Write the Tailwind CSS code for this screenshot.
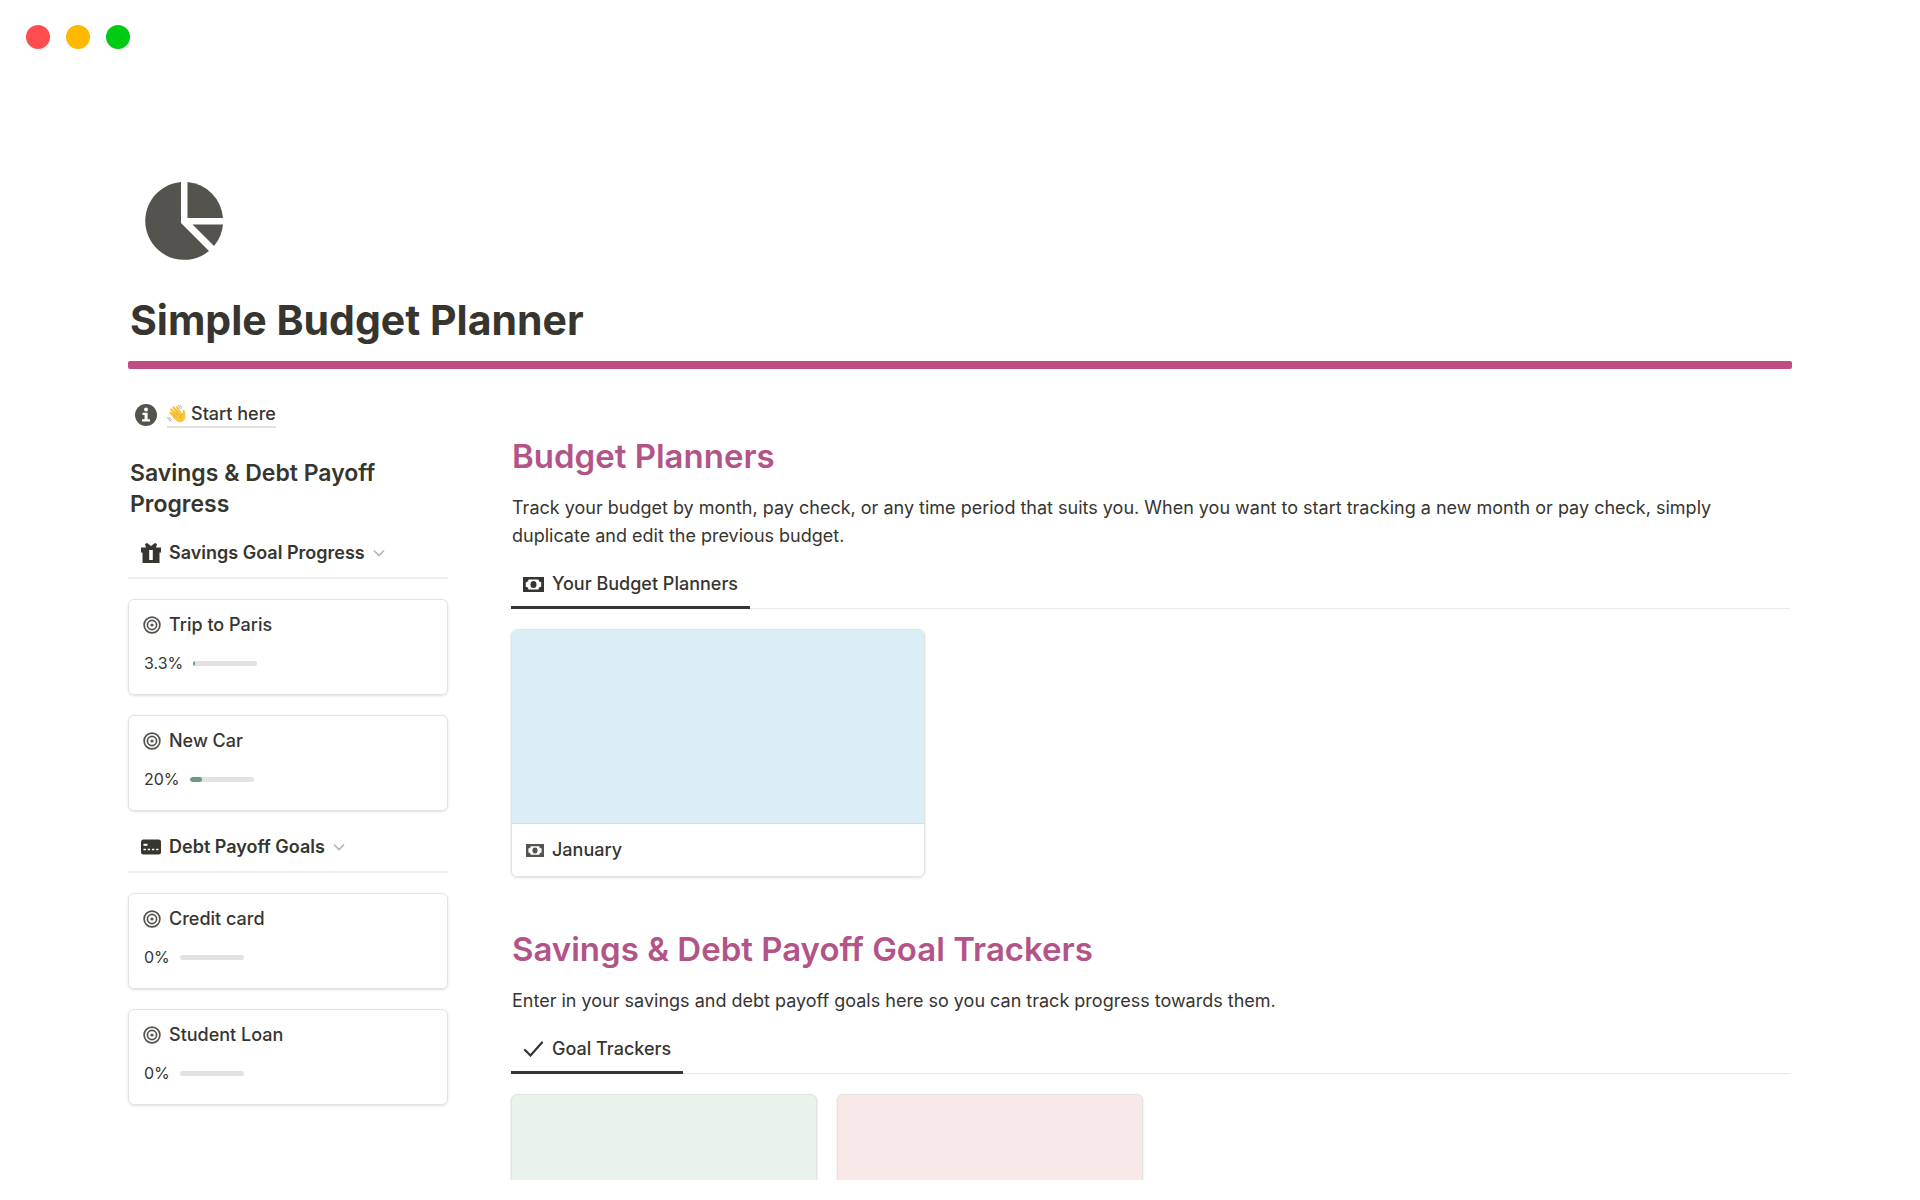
<!DOCTYPE html>
<html lang="en">
<head>
    <meta charset="UTF-8">
    <meta name="viewport" content="width=device-width, initial-scale=1.0">
    <title>Simple Budget Planner</title>
    <script src="https://cdn.jsdelivr.net/npm/@tailwindcss/browser@4"></script>
</head>
<body class="bg-white font-['Inter',sans-serif] text-[#37352f] text-[18px] leading-7 h-screen flex flex-col overflow-hidden pb-5">
    <!-- Shared icons -->
    <svg class="hidden">
        <symbol id="icon-target" viewBox="0 0 18 18">
            <g fill="none" stroke="currentColor" stroke-width="1.7">
                <circle cx="9" cy="9" r="7.9"/>
                <circle cx="9" cy="9" r="4.6"/>
            </g>
            <circle cx="9" cy="9" r="1.6" fill="currentColor"/>
        </symbol>
        <symbol id="icon-cash" viewBox="0 0 21 15">
            <path fill="currentColor" fill-rule="evenodd" d="M0 0H21V15H0ZM5.5 2.5C5.500 4 4.500 5 2.800 5.200V9.800C4.500 10 5.500 11 5.500 12.500H15.500C15.500 11 16.500 10 18.200 9.800V5.200C16.500 5 15.500 4 15.500 2.500Z"/>
            <ellipse cx="10.500" cy="7.500" rx="3" ry="3.500" fill="currentColor"/>
        </symbol>
        <symbol id="icon-chevron" viewBox="0 0 12 8">
            <path d="M1 1.500L6 6.500L11 1.500" fill="none" stroke="currentColor" stroke-width="1.600"/>
        </symbol>
    </svg>

    <!-- Window controls -->
    <div class="flex gap-4 pl-[26px] pt-[25px]">
        <button aria-label="Close" class="size-6 rounded-full bg-[#ff4d4f]"></button>
        <button aria-label="Minimize" class="size-6 rounded-full bg-[#ffb800]"></button>
        <button aria-label="Zoom" class="size-6 rounded-full bg-[#00ca14]"></button>
    </div>

    <main class="flex-1 min-h-0 overflow-hidden px-32 pt-[133px]">
        <!-- Page header -->
        <header>
            <svg class="size-[78px] ml-[17px] text-[#55534e]" viewBox="0 0 78 78" fill="currentColor">
                <path d="M36 0A39 39 0 1 0 64 69L36 41Z"/>
                <path d="M42.500 0A39 39 0 0 1 78 36H42.500Z"/>
                <path d="M47.500 42.500H78A39 39 0 0 1 69 64Z"/>
            </svg>
            <h1 class="pl-0.5 pt-8 text-[41px] leading-14 font-bold">Simple Budget Planner</h1>
            <div class="mt-[13px] h-2 rounded-xs bg-[#c14c80]"></div>
        </header>

        <div class="flex gap-16 pt-8">
            <!-- Sidebar -->
            <aside class="w-80 shrink-0">
                <div class="flex items-center gap-2.5 pl-[7px] pt-px">
                    <svg class="size-[22px] text-[#55534e]" viewBox="0 0 22 22">
                        <circle cx="11" cy="11" r="11" fill="currentColor"/>
                        <circle cx="11" cy="5.500" r="2" fill="#fff"/>
                        <path d="M7.500 8.800H12.600V15.300H15V17.500H7V15.300H9.600V11H7.500Z" fill="#fff"/>
                    </svg>
                    <a href="#start" class="flex items-center gap-1 border-b-2 border-[#e3e2e0] font-medium leading-6">
                        <svg class="size-5" viewBox="0 0 20 20" fill="none" stroke-linecap="round">
                            <path d="M4 5.500L10.500 13M6.500 3.500L12 11M9.800 3.200L14 10M3.500 9L9.500 15" stroke="#fbc53d" stroke-width="2.200"/>
                            <path d="M7.500 9.500L13.500 8.500L15.500 9.500L16 5.800C17.600 5.500 18.300 7 18.300 9V13.500C17.800 17 14.500 19 11.500 18C9.500 17.300 7.500 15.300 5.800 13.600Z" fill="#fbc53d"/>
                            <path d="M6.500 7L10 11M8.600 5.600L12 10.200M5.500 9.500L9 13M15.500 10C13.600 11 13 12.500 13.300 14" stroke="#e09a24" stroke-width=".7"/>
                            <path d="M11.500 1.200C13.200 1.400 14.200 2.500 14.500 4M12 3C12.700 3.300 13 3.800 13.200 4.500M.8 13.500C1.200 15.300 2.300 16.500 4 17M2.500 13.500C2.900 14.500 3.400 15 4.200 15.400" stroke="#a5a5a5" stroke-width="1"/>
                        </svg>
                        Start here
                    </a>
                </div>

                <h3 class="pl-0.5 pt-[30px] text-[23px] leading-[31px] font-semibold">Savings &amp; Debt Payoff Progress</h3>

                <button class="mt-[19px] flex w-full items-center gap-2 border-b-2 border-[#eeeeed] pb-2.5 pl-[13px] font-semibold leading-7">
                    <svg class="size-5" viewBox="0 0 20 20" fill="currentColor">
                        <path fill-rule="evenodd" d="M0 4.500H5L4 1L6 0L10 3L14 0L16 1L15 4.500H20V9.500H18.500V20H1.500V9.500H0ZM8.200 7V17H11.800V7Z"/>
                    </svg>
                    Savings Goal Progress
                    <svg class="w-3 h-2 text-[#b5b4b1]"><use href="#icon-chevron"/></svg>
                </button>

                <div class="flex flex-col gap-5 pt-5">
                    <article class="h-24 rounded-md border border-[#e2e2e1] px-3.5 pt-[11px] shadow-sm">
                        <h4 class="flex items-center gap-2 font-medium"><svg class="size-[18px] text-[#55534e]"><use href="#icon-target"/></svg>Trip to Paris</h4>
                        <div class="flex items-center gap-2.5 pl-px pt-3 text-[16px] leading-6">3.3%
                            <div class="flex h-[5px] w-16 overflow-hidden rounded-full bg-[#e3e2e0]"><div class="rounded-full bg-[#6c9b7d]" style="width: 3.3%"></div></div>
                        </div>
                    </article>
                    <article class="h-24 rounded-md border border-[#e2e2e1] px-3.5 pt-[11px] shadow-sm">
                        <h4 class="flex items-center gap-2 font-medium"><svg class="size-[18px] text-[#55534e]"><use href="#icon-target"/></svg>New Car</h4>
                        <div class="flex items-center gap-2.5 pl-px pt-3 text-[16px] leading-6">20%
                            <div class="flex h-[5px] w-16 overflow-hidden rounded-full bg-[#e3e2e0]"><div class="rounded-full bg-[#6c9b7d]" style="width: 20%"></div></div>
                        </div>
                    </article>
                </div>

                <button class="mt-[22px] flex w-full items-center gap-2 border-b-2 border-[#eeeeed] pb-2.5 pl-[13px] font-semibold leading-7">
                    <svg class="size-5" viewBox="0 0 20 20">
                        <rect y="2.500" width="20" height="15" rx="2.500" fill="currentColor"/>
                        <path d="M2.500 7.800H6.500" stroke="#fff" stroke-width="2"/>
                        <path d="M2.500 12.500H17.500" stroke="#fff" stroke-width="1.600" stroke-dasharray="2.400 1.800"/>
                    </svg>
                    Debt Payoff Goals
                    <svg class="w-3 h-2 text-[#b5b4b1]"><use href="#icon-chevron"/></svg>
                </button>

                <div class="flex flex-col gap-5 pt-5">
                    <article class="h-24 rounded-md border border-[#e2e2e1] px-3.5 pt-[11px] shadow-sm">
                        <h4 class="flex items-center gap-2 font-medium"><svg class="size-[18px] text-[#55534e]"><use href="#icon-target"/></svg>Credit card</h4>
                        <div class="flex items-center gap-2.5 pl-px pt-3 text-[16px] leading-6">0%
                            <div class="h-[5px] w-16 rounded-full bg-[#e3e2e0]"></div>
                        </div>
                    </article>
                    <article class="h-24 rounded-md border border-[#e2e2e1] px-3.5 pt-[11px] shadow-sm">
                        <h4 class="flex items-center gap-2 font-medium"><svg class="size-[18px] text-[#55534e]"><use href="#icon-target"/></svg>Student Loan</h4>
                        <div class="flex items-center gap-2.5 pl-px pt-3 text-[16px] leading-6">0%
                            <div class="h-[5px] w-16 rounded-full bg-[#e3e2e0]"></div>
                        </div>
                    </article>
                </div>
            </aside>

            <!-- Main column -->
            <div class="flex-1 min-w-0 -ml-px mr-0.5">
                <section class="pt-[31px]">
                    <h2 class="pl-px text-[33px] leading-12 font-semibold text-[#b35488]">Budget Planners</h2>
                    <p class="pl-px pt-3.5">Track your budget by month, pay check, or any time period that suits you. When you want to start tracking a new month or pay check, simply duplicate and edit the previous budget.</p>
                    <div class="mt-3 flex border-b border-[#e9e9e7]">
                        <button class="-mb-px flex items-center gap-2 border-b-3 border-[#37352f] px-3 pb-2 pt-2 font-medium">
                            <svg class="w-[21px] h-[15px]"><use href="#icon-cash"/></svg>
                            Your Budget Planners
                        </button>
                    </div>
                    <div class="mt-5 w-[414px] overflow-hidden rounded-md border border-[#e2e2e1] shadow-sm">
                        <div class="h-[194px] border-b border-[#cfdfe6] bg-[#dbeef6]"></div>
                        <h4 class="flex items-center gap-2 px-3.5 py-3 font-medium"><svg class="w-[18px] h-[13px] text-[#55534e]"><use href="#icon-cash"/></svg>January</h4>
                    </div>
                </section>

                <section class="pt-12">
                    <h2 class="pl-px text-[33px] leading-12 font-semibold text-[#b35488]">Savings &amp; Debt Payoff Goal Trackers</h2>
                    <p class="pl-px pt-3.5">Enter in your savings and debt payoff goals here so you can track progress towards them.</p>
                    <div class="mt-3 flex border-b border-[#e9e9e7]">
                        <button class="-mb-px flex items-center gap-2 border-b-3 border-[#37352f] px-3 pb-2 pt-2 font-medium">
                            <svg class="w-[21px] h-4" viewBox="0 0 21 16" fill="none" stroke="currentColor" stroke-width="2.200" stroke-linecap="round"><path d="M2 9L7.500 14.500L19 1.500"/></svg>
                            Goal Trackers
                        </button>
                    </div>
                    <div class="mt-5 flex gap-5">
                        <div class="h-[248px] w-[306px] overflow-hidden rounded-md border border-[#e2e2e1] bg-[#e9f3eb] shadow-sm"></div>
                        <div class="h-[248px] w-[306px] overflow-hidden rounded-md border border-[#e2e2e1] bg-[#f9e8e8] shadow-sm"></div>
                    </div>
                </section>
            </div>
        </div>
    </main>
</body>
</html>
